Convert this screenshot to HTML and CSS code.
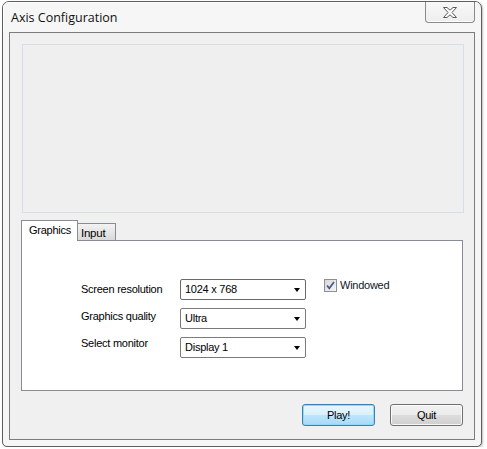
FILE: index.html
```html
<!DOCTYPE html>
<html>
<head>
<meta charset="utf-8">
<link rel="stylesheet" href="styles.css">
</head>
<body>
<div class="window">
  <div class="titlebar">
    <span class="title">Axis Configuration</span>
    <div class="close">
      <svg width="14" height="11" viewBox="0 0 14 11"><polygon points="0.5,0.5 4,0.5 7,3.2 10,0.5 13.5,0.5 9,5.5 13.5,10.5 10,10.5 7,7.8 4,10.5 0.5,10.5 5,5.5" fill="#fdfdfd" stroke="#5b5b5b" stroke-width="1" stroke-linejoin="round"/></svg>
    </div>
  </div>
  <div class="client">
    <div class="picture"></div>
    <div class="tabs">
      <div class="tab active">Graphics</div>
      <div class="tab">Input</div>
    </div>
    <div class="tabpanel">
      <div class="labels">
        <span>Screen resolution</span>
        <span>Graphics quality</span>
        <span>Select monitor</span>
      </div>
      <div class="combos">
        <div class="combo first"><span>1024 x 768</span><i class="arrow"></i></div>
        <div class="combo"><span>Ultra</span><i class="arrow"></i></div>
        <div class="combo"><span>Display 1</span><i class="arrow"></i></div>
      </div>
      <div class="check">
        <span class="box"><svg width="11" height="11" viewBox="0 0 11 11"><path d="M2 5.5 L4.3 8.3 L9 2" fill="none" stroke="#4a5d8c" stroke-width="1.8"/></svg></span>
        <span class="check-label">Windowed</span>
      </div>
    </div>
    <div class="buttons">
      <div class="btn default">Play!</div>
      <div class="btn">Quit</div>
    </div>
  </div>
</div>
</body>
</html>
```
FILE: styles.css
```css
html, body {
  margin: 0;
  background: #ffffff;
}
body {
  padding: 1px 0 0 2px;
  font-family: "Liberation Sans", Arial, sans-serif;
  font-size: 11px;
  letter-spacing: -0.25px;
  color: #000;
}
.window {
  width: 480px;
  height: 446px;
  box-sizing: border-box;
  border: 1px solid #5f5f5f;
  border-radius: 7px 7px 5px 5px;
  background: #f6f6f6;
  display: flex;
  flex-direction: column;
  box-shadow: 1px 1px 2px rgba(0,0,0,0.25);
  overflow: hidden;
}
.titlebar {
  height: 30px;
  flex: none;
  display: flex;
  justify-content: space-between;
  align-items: flex-start;
  padding: 0 6px 0 8px;
  box-shadow: inset 1px 1px 0 #ffffff;
}
.title {
  margin-top: 8px;
  font-family: "Open Sans", "Noto Sans", sans-serif;
  font-size: 12.5px;
  line-height: 16px;
  letter-spacing: 0;
  color: #111;
}
.close {
  width: 48px;
  height: 20px;
  box-sizing: content-box;
  border: 1px solid #8a8a8a;
  border-top: none;
  border-radius: 0 0 4px 4px;
  background: linear-gradient(#f8f8f8, #eeeeee);
  display: flex;
  align-items: center;
  justify-content: center;
  box-shadow: inset 0 -1px 0 #ffffff;
  margin-top: -1px;
  padding-top: 1px;
}
.close svg { display: block; margin-top: 1px; }
.client {
  flex: 1;
  margin: 0 6px 6px 6px;
  border: 1px solid #7c7c7c;
  background: #f0f0f0;
  display: flex;
  flex-direction: column;
}
.picture {
  margin: 11px 0 0 12px;
  width: 442px;
  height: 169px;
  box-sizing: border-box;
  border: 1px solid #d6dfe6;
  background: #efefef;
}
.tabs {
  margin: 7px 0 0 11px;
  height: 20px;
  display: flex;
  align-items: flex-end;
}
.tab {
  box-sizing: border-box;
  height: 17px;
  width: 38px;
  border: 1px solid #898c95;
  border-left: none;
  border-bottom: none;
  background: linear-gradient(#f3f3f3, #e5e5e5 50%, #d9d9d9);
  padding: 3px 0 0 3px;
  line-height: 13px;
  font-size: 11.5px;
}
.tab.active {
  width: 57px;
  height: 21px;
  border-left: 1px solid #898c95;
  background: #ffffff;
  padding: 3px 0 0 7px;
  margin-bottom: -1px;
  position: relative;
  z-index: 1;
  font-size: 11px;
}
.tabpanel {
  margin-left: 11px;
  width: 442px;
  height: 151px;
  box-sizing: border-box;
  border: 1px solid #898c95;
  background: #ffffff;
  display: flex;
  align-items: flex-start;
  padding: 38px 0 0 59px;
}
.labels {
  width: 99px;
  padding-top: 4px;
  display: flex;
  flex-direction: column;
  gap: 14px;
  line-height: 13px;
}
.combos {
  width: 126px;
  display: flex;
  flex-direction: column;
  gap: 8px;
}
.combo {
  height: 21px;
  box-sizing: border-box;
  border: 1px solid #7a7a7a;
  border-radius: 2px;
  background: #ffffff;
  display: flex;
  align-items: center;
  justify-content: space-between;
  padding: 0 5px 0 4px;
  line-height: 13px;
}
.combo.first { border-color: #6a6a6a; }
.arrow {
  width: 0;
  height: 0;
  border-left: 3.5px solid transparent;
  border-right: 3.5px solid transparent;
  border-top: 4px solid #000;
  margin-top: 1px;
}
.check {
  margin-left: 18px;
  display: flex;
  align-items: flex-start;
  gap: 3px;
  line-height: 13px;
}
.box {
  width: 13px;
  height: 13px;
  box-sizing: border-box;
  border: 1px solid #8e8f8f;
  background: linear-gradient(135deg, #d8d8d8, #f6f6f6);
  display: flex;
  align-items: center;
  justify-content: center;
}
.box svg { display: block; }
.check-label { margin-top: 0; color: #101828; }
.buttons {
  margin: 13px 11px 0 0;
  display: flex;
  justify-content: flex-end;
  gap: 15px;
}
.btn {
  width: 73px;
  height: 22px;
  box-sizing: border-box;
  border: 1px solid #707070;
  border-radius: 3px;
  background: linear-gradient(#f2f2f2 0%, #ebebeb 50%, #dddddd 51%, #cfcfcf 100%);
  box-shadow: inset 0 0 0 1px rgba(255,255,255,0.8);
  display: flex;
  align-items: center;
  justify-content: center;
  line-height: 13px;
}
.btn.default {
  border-color: #3c7fb1;
  background: linear-gradient(#eaf6fd 0%, #d9f0fc 50%, #bee6fd 51%, #a7d9f5 100%);
  box-shadow: inset 0 0 0 1px #8ddbf7;
}
```
